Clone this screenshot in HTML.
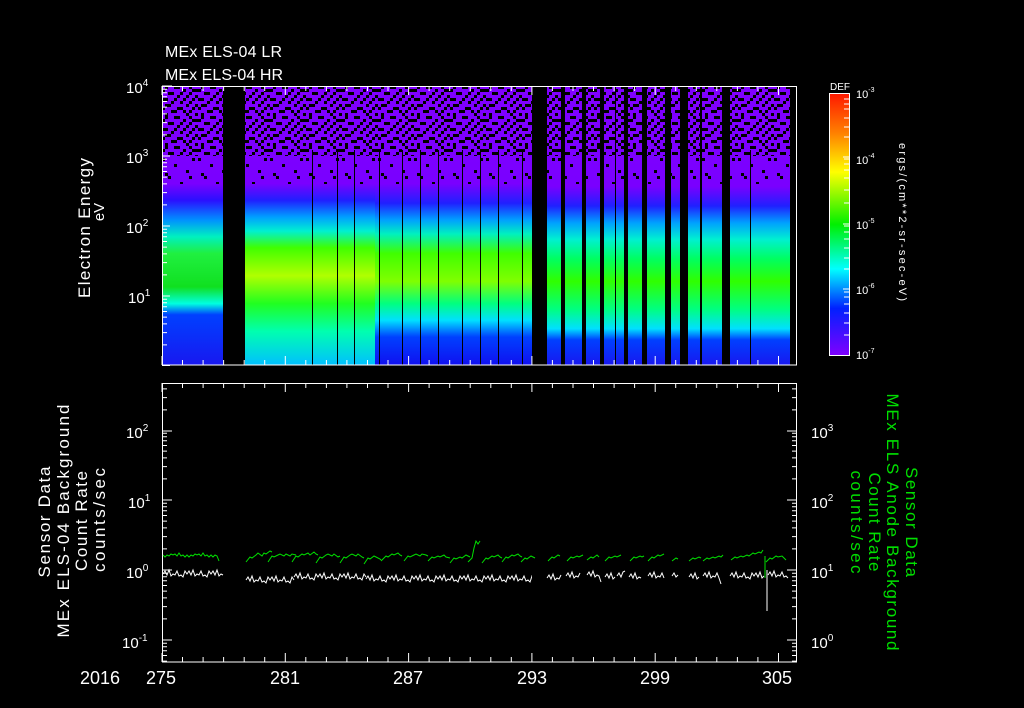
<!DOCTYPE html>
<html><head><meta charset="utf-8"><style>
html,body{margin:0;padding:0;background:#000;width:1024px;height:708px;overflow:hidden}
svg{display:block}
text{font-family:"Liberation Sans",sans-serif;fill:#fff}
</style></head><body>
<svg width="1024" height="708" viewBox="0 0 1024 708" xmlns="http://www.w3.org/2000/svg">
<defs>
<linearGradient id="gA" x1="0" y1="86" x2="0" y2="365" gradientUnits="userSpaceOnUse">
<stop offset="0" stop-color="#8000ff"/><stop offset=".35" stop-color="#7a00ff"/><stop offset=".41" stop-color="#2a10ff"/><stop offset=".48" stop-color="#0090ff"/><stop offset=".54" stop-color="#00f0c0"/><stop offset=".6" stop-color="#20f040"/><stop offset=".72" stop-color="#10e020"/><stop offset=".78" stop-color="#00ffe0"/><stop offset=".82" stop-color="#0040ff"/><stop offset="1" stop-color="#1818f0"/></linearGradient>
<linearGradient id="gB" x1="0" y1="86" x2="0" y2="365" gradientUnits="userSpaceOnUse">
<stop offset="0" stop-color="#8000ff"/><stop offset=".35" stop-color="#7a00ff"/><stop offset=".41" stop-color="#2020ff"/><stop offset=".47" stop-color="#00a0ff"/><stop offset=".52" stop-color="#00f0d0"/><stop offset=".58" stop-color="#40ff00"/><stop offset=".68" stop-color="#b0ff00"/><stop offset=".78" stop-color="#20ff20"/><stop offset=".88" stop-color="#00ffb0"/><stop offset="1" stop-color="#00c0ff"/></linearGradient>
<linearGradient id="gC" x1="0" y1="86" x2="0" y2="365" gradientUnits="userSpaceOnUse">
<stop offset="0" stop-color="#8000ff"/><stop offset=".35" stop-color="#7a00ff"/><stop offset=".42" stop-color="#2020ff"/><stop offset=".48" stop-color="#00a0ff"/><stop offset=".53" stop-color="#00f0c0"/><stop offset=".6" stop-color="#40ff00"/><stop offset=".7" stop-color="#80ff00"/><stop offset=".78" stop-color="#00ff80"/><stop offset=".84" stop-color="#00e0ff"/><stop offset=".9" stop-color="#0040ff"/><stop offset="1" stop-color="#1010f0"/></linearGradient>
<linearGradient id="gD" x1="0" y1="86" x2="0" y2="365" gradientUnits="userSpaceOnUse">
<stop offset="0" stop-color="#8000ff"/><stop offset=".36" stop-color="#7a00ff"/><stop offset=".43" stop-color="#2020ff"/><stop offset=".49" stop-color="#00a0ff"/><stop offset=".55" stop-color="#00f0d0"/><stop offset=".62" stop-color="#00ff60"/><stop offset=".7" stop-color="#30ff00"/><stop offset=".8" stop-color="#00ff80"/><stop offset=".87" stop-color="#00e0ff"/><stop offset=".91" stop-color="#0040ff"/><stop offset="1" stop-color="#1818f0"/></linearGradient>
<linearGradient id="cb" x1="0" y1="0" x2="0" y2="1">
<stop offset="0" stop-color="#ff1800"/><stop offset=".15" stop-color="#ff8000"/><stop offset=".3" stop-color="#ffff00"/><stop offset=".5" stop-color="#00f000"/><stop offset=".67" stop-color="#00ffff"/><stop offset=".82" stop-color="#0020ff"/><stop offset="1" stop-color="#8000ff"/></linearGradient>
<pattern id="nD" width="36" height="30" patternUnits="userSpaceOnUse" x="162" y="86">
<g fill="#000">
<rect x="3" y="0" width="3" height="3"/><rect x="12" y="0" width="6" height="3"/><rect x="27" y="0" width="3" height="3"/>
<rect x="0" y="3" width="3" height="3"/><rect x="21" y="3" width="3" height="3"/><rect x="30" y="3" width="6" height="3"/>
<rect x="6" y="6" width="6" height="3"/><rect x="18" y="6" width="3" height="3"/><rect x="27" y="6" width="3" height="3"/>
<rect x="15" y="9" width="3" height="3"/><rect x="24" y="9" width="3" height="3"/><rect x="33" y="9" width="3" height="3"/>
<rect x="0" y="12" width="6" height="3"/><rect x="12" y="12" width="3" height="3"/><rect x="21" y="12" width="3" height="3"/><rect x="30" y="12" width="3" height="3"/>
<rect x="9" y="15" width="3" height="3"/><rect x="18" y="15" width="3" height="3"/><rect x="27" y="15" width="3" height="3"/>
<rect x="3" y="18" width="6" height="3"/><rect x="24" y="18" width="3" height="3"/><rect x="33" y="18" width="3" height="3"/>
<rect x="0" y="21" width="3" height="3"/><rect x="15" y="21" width="6" height="3"/><rect x="30" y="21" width="3" height="3"/>
<rect x="9" y="24" width="6" height="3"/><rect x="21" y="24" width="3" height="3"/><rect x="27" y="24" width="3" height="3"/>
<rect x="3" y="27" width="3" height="3"/><rect x="24" y="27" width="3" height="3"/><rect x="33" y="27" width="3" height="3"/>
</g></pattern>
<pattern id="nS" width="36" height="30" patternUnits="userSpaceOnUse" x="162" y="86">
<g fill="#000"><rect x="6" y="0" width="3" height="3"/><rect x="27" y="0" width="3" height="3"/><rect x="18" y="6" width="3" height="3"/><rect x="0" y="12" width="3" height="3"/><rect x="30" y="12" width="3" height="3"/><rect x="12" y="18" width="3" height="3"/><rect x="24" y="24" width="3" height="3"/><rect x="3" y="27" width="3" height="3"/></g></pattern>
<g id="xt" stroke="#fff" stroke-width="1">
<path d="M162,0v9M182.5,0v5M203.1,0v5M223.6,0v5M244.2,0v5M264.7,0v5M285.3,0v9M305.8,0v5M326.4,0v5M346.9,0v5M367.5,0v5M388,0v5M408.6,0v9M429.1,0v5M449.7,0v5M470.2,0v5M490.8,0v5M511.3,0v5M531.9,0v9M552.4,0v5M573,0v5M593.5,0v5M614.1,0v5M634.6,0v5M655.2,0v9M675.7,0v5M696.3,0v5M716.8,0v5M737.4,0v5M757.9,0v5M778.5,0v9"/></g>
<g id="dec" stroke="#fff" stroke-width="1"><path d="M0,0h10M0,-21.1h5M0,-33.4h5M0,-42.1h5M0,-48.9h5M0,-54.5h5M0,-59.2h5M0,-63.2h5M0,-66.8h5"/></g>
<clipPath id="cT"><rect x="150" y="86" width="20" height="280"/></clipPath>
<clipPath id="cBt"><rect x="150" y="383" width="700" height="280"/></clipPath>
<clipPath id="cB2"><rect x="245" y="383" width="287" height="279"/></clipPath>
</defs>

<!-- spectrogram -->
<rect x="162" y="86" width="61" height="279" fill="url(#gA)"/>
<rect x="245" y="86" width="130" height="279" fill="url(#gB)"/>
<rect x="375" y="86" width="157" height="279" fill="url(#gC)"/>
<rect x="547" y="86" width="243" height="279" fill="url(#gD)"/>
<rect x="162" y="86" width="628" height="70" fill="url(#nD)"/>
<rect x="162" y="156" width="628" height="28" fill="url(#nS)"/>
<g fill="#000">
<rect x="223" y="86" width="22" height="279"/>
<rect x="532" y="86" width="15" height="279"/>
<rect x="561" y="86" width="4" height="279"/>
<rect x="582" y="86" width="4" height="279"/>
<rect x="600" y="86" width="4" height="279"/>
<rect x="615" y="86" width="1" height="279"/>
<rect x="624" y="86" width="4" height="279"/>
<rect x="642" y="86" width="5" height="279"/>
<rect x="665" y="86" width="6" height="279"/>
<rect x="680" y="86" width="8" height="279"/>
<rect x="700" y="86" width="2" height="279"/>
<rect x="722" y="86" width="8" height="279"/>
<rect x="790" y="86" width="7" height="279"/>
</g>
<g stroke="#000" stroke-width="1"><path d="M312.5,150V365M337.5,150V365M354.5,150V365M379.5,150V365M402.5,150V365M420.5,150V365M438.5,150V365M462.5,150V365M480.5,150V365M498.5,150V365M522.5,150V365M750.5,150V365"/></g>

<!-- top panel frame -->
<rect x="162.5" y="86.5" width="634" height="278.5" fill="none" stroke="#fff"/>
<use href="#xt" transform="translate(0,86)"/>
<use href="#xt" transform="translate(0,365) scale(1,-1)"/>
<g clip-path="url(#cT)">
<use href="#dec" transform="translate(162,366)"/>
<use href="#dec" transform="translate(162,296)"/>
<use href="#dec" transform="translate(162,226)"/>
<use href="#dec" transform="translate(162,156)"/>
</g>
<path d="M162,86h10" stroke="#fff"/>

<text x="165" y="57" font-size="16" textLength="117">MEx ELS-04 LR</text>
<text x="165" y="80" font-size="16" textLength="118">MEx ELS-04 HR</text>

<g font-size="15">
<text x="126" y="93">10<tspan font-size="10" dy="-7">4</tspan></text>
<text x="126" y="163">10<tspan font-size="10" dy="-7">3</tspan></text>
<text x="126" y="233">10<tspan font-size="10" dy="-7">2</tspan></text>
<text x="128" y="303">10<tspan font-size="10" dy="-7">1</tspan></text>
</g>
<text transform="translate(90,228) rotate(-90)" text-anchor="middle" font-size="17" textLength="140">Electron Energy</text>
<text transform="translate(104,212) rotate(-90)" text-anchor="middle" font-size="15">eV</text>

<!-- colorbar -->
<rect x="829.5" y="93.5" width="20" height="262" fill="url(#cb)" stroke="#fff"/>
<g stroke="#fff"><path d="M849,99h-5M849,104h-5M849,109h-5M849,118h-5M849,127h-5M849,137h-5M849,157h-6M849,159h-5M849,164h-5M849,170h-5M849,178h-5M849,190h-5M849,203h-5M849,224h-6M849,226h-5M849,232h-5M849,239h-5M849,248h-5M849,258h-5M849,269h-5M849,289h-6M849,292h-5M849,297h-5M849,304h-5M849,313h-5M849,323h-5M849,335h-5"/></g>
<text x="830" y="90" font-size="10">DEF</text>
<g font-size="11">
<text x="856" y="98">10<tspan font-size="7" dy="-6">-3</tspan></text>
<text x="856" y="164">10<tspan font-size="7" dy="-6">-4</tspan></text>
<text x="856" y="229">10<tspan font-size="7" dy="-6">-5</tspan></text>
<text x="856" y="294">10<tspan font-size="7" dy="-6">-6</tspan></text>
<text x="856" y="359">10<tspan font-size="7" dy="-6">-7</tspan></text>
</g>
<text transform="translate(899,222) rotate(90)" text-anchor="middle" font-size="11" textLength="158">ergs/(cm**2-sr-sec-eV)</text>

<!-- bottom panel -->
<rect x="162.5" y="383.5" width="634" height="278.5" fill="none" stroke="#fff"/>
<use href="#xt" transform="translate(0,383)"/>
<use href="#xt" transform="translate(0,662) scale(1,-1)"/>
<g clip-path="url(#cBt)">
<use href="#dec" transform="translate(162,710)"/>
<use href="#dec" transform="translate(162,640)"/>
<use href="#dec" transform="translate(162,570)"/>
<use href="#dec" transform="translate(162,500)"/>
<use href="#dec" transform="translate(162,431)"/>
<use href="#dec" transform="translate(797,710) scale(-1,1)"/>
<use href="#dec" transform="translate(797,640) scale(-1,1)"/>
<use href="#dec" transform="translate(797,570) scale(-1,1)"/>
<use href="#dec" transform="translate(797,500) scale(-1,1)"/>
<use href="#dec" transform="translate(797,431) scale(-1,1)"/>
</g>
<g font-size="15">
<text x="126" y="438">10<tspan font-size="10" dy="-7">2</tspan></text>
<text x="128" y="508">10<tspan font-size="10" dy="-7">1</tspan></text>
<text x="126" y="578">10<tspan font-size="10" dy="-7">0</tspan></text>
<text x="122" y="648">10<tspan font-size="10" dy="-7">-1</tspan></text>
<text x="811" y="438">10<tspan font-size="10" dy="-7">3</tspan></text>
<text x="811" y="508">10<tspan font-size="10" dy="-7">2</tspan></text>
<text x="811" y="578">10<tspan font-size="10" dy="-7">1</tspan></text>
<text x="811" y="648">10<tspan font-size="10" dy="-7">0</tspan></text>
</g>

<!-- data lines -->
<g fill="none" stroke-width="1">
<g stroke="#fff">
<path d="M163,574 l2,-3 l2,4 l2,-5 l2,6 l2,-2 l2,1 l2,-4 l2,5 l2,-1 l2,2 l2,-6 l2,3 l2,-3 l2,4 l2,-5 l2,6 l2,-2 l2,1 l2,-4 l2,5 l2,-1 l2,2 l2,-6 l2,3 l2,-3 l2,4 l2,-5 l2,6 l2,-2 l2,1"/>
<g clip-path="url(#cB2)">
<path d="M246,580 l2,-3 l2,4 l2,-5 l2,6 l2,-2 l2,1 l2,-4 l2,5 l2,-1 l2,2 l2,-6 l2,3 l2,-3 l2,4 l2,-5 l2,6 l2,-2 l2,1 l2,-4 l2,5 l2,-1 l2,2 l2,-6 l2,3 m0,-3 l2,-3 l2,4 l2,-5 l2,6 l2,-2 l2,1 l2,-4 l2,5 l2,-1 l2,2 l2,-6 l2,3 l2,-3 l2,4 l2,-5 l2,6 l2,-2 l2,1 l2,-4 l2,5 l2,-1 l2,2 l2,-6 l2,3 l2,-3 l2,4 l2,-5 l2,6 l2,-2 l2,1 l2,-4 l2,5 l2,-1 l2,2 l2,-6 l2,3 m0,2 l2,-3 l2,4 l2,-5 l2,6 l2,-2 l2,1 l2,-4 l2,5 l2,-1 l2,2 l2,-6 l2,3 l2,-3 l2,4 l2,-5 l2,6 l2,-2 l2,1 l2,-4 l2,5 l2,-1 l2,2 l2,-6 l2,3 l2,-3 l2,4 l2,-5 l2,6 l2,-2 l2,1 l2,-4 l2,5 l2,-1 l2,2 l2,-6 l2,3 l2,-3 l2,4 l2,-5 l2,6 l2,-2 l2,1 l2,-4 l2,5 l2,-1 l2,2 l2,-6 l2,3 l2,-3 l2,4 l2,-5 l2,6 l2,-2 l2,1 l2,-4 l2,5 l2,-1 l2,2 l2,-6 l2,3 l2,-3 l2,4 l2,-5 l2,6 l2,-2 l2,1 l2,-4 l2,5 l2,-1 l2,2 l2,-6 l2,3 l2,-3 l2,4 l2,-5 l2,6 l2,-2 l2,1 l2,-4 l2,5 l2,-1 l2,2 l2,-6 l2,3 l2,-3 l2,4 l2,-5 l2,6 l2,-2 l2,1 l2,-4 l2,5 l2,-1 l2,2 l2,-6 l2,3 l2,-3 l2,4 l2,-5 l2,6 l2,-2 l2,1 l2,-4 l2,5 l2,-1 l2,2 l2,-6 l2,3"/>
</g>
<path d="M547,578 l2,-3 l2,4 l2,-5 l2,6 l2,-2 l2,1 l2,-4 M566,576 l2,-3 l2,4 l2,-5 l2,6 l2,-2 l2,1 l2,-4 M587,575 l2,-3 l2,4 l2,-5 l2,6 l2,-2 l2,1 l2,6 M605,577 l2,-3 l2,4 l2,-5 l2,6 l2,-2 M617,576 l2,-3 l2,4 l2,-5 l2,-1 M629,577 l2,-3 l2,4 l2,-5 l2,6 l2,-2 l2,1 M648,576 l2,-3 l2,4 l2,-5 l2,6 l2,-2 l2,1 l2,-4 l2,5 M672,576 l2,-3 l2,4 l2,-2 M689,577 l2,-3 l2,4 l2,-5 l2,6 l2,-2 M703,576 l2,-3 l2,4 l2,-5 l2,6 l2,-2 l2,1 l2,-4 l2,5 l2,6"/>
<path d="M730,576 l2,-3 l2,4 l2,-5 l2,6 l2,-2 l2,1 l2,-4 l2,5 l2,-1 l2,2 l2,-6 l2,3 l2,-3 l2,4 l2,-5 l2,6 l2,-2 M767,570 V611 M768,575 l2,-3 l2,4 l2,-5 l2,6 l2,-2 l2,1 l2,-4 l2,5 l2,-1 l2,2"/>
</g>
<g stroke="#00e000">
<path d="M163,555 l2,2 l2,-2 l2,1 l2,-2 l2,1 l2,-1 l2,2 l2,-3 l2,3 l2,-1 l2,2 l2,-2 l2,2 l2,-2 l2,1 l2,-2 l2,1 l2,-1 l2,2 l2,-3 l2,3 l2,-1 l2,2 l2,-2 l2,2 l2,-2 l2,1 l2,5"/>
<path d="M246,562 l4,-5 l2,1 l4,-3 l2,-2 l4,3 l2,-3 l2,1 l4,-3 l2,1 M268,562 l4,-6 l2,1 l4,-2 l2,-1 l4,2 l2,-2 l4,2 l2,-2 l4,1 M292,562 l4,-6 l2,1 l4,-3 l2,1 l4,-2 l2,2 l4,-3 l2,2 l2,1 M316,563 l4,-6 l2,1 l4,-3 l2,-1 l4,2 l2,-2 l4,3 l2,-1 M340,563 l4,-6 l2,1 l4,-3 l2,-1 l4,2 l2,-2 l4,3 l2,1 M364,564 l4,-6 l2,1 l4,-3 l2,1 l4,2 l2,2 M382,560 l4,-4 l2,1 l4,-3 l2,1 l4,-2 l2,2 l2,1 M404,561 l4,-5 l2,1 l4,-2 l2,-1 l4,2 l2,-2 l4,1 l2,1 M428,561 l4,-4 l2,1 l4,-2 l2,1 l4,-2 l2,2 l4,1 M450,563 l4,-5 l2,1 l4,-2 l2,1 l4,-3 l2,1 l2,1 M468,562 l4,-4 l2,-10 l2,-7 l2,3 l2,-3"/>
<path d="M482,563 l4,-5 l2,1 l4,-3 l2,1 l4,-2 l2,2 l2,1 M502,562 l4,-5 l2,1 l4,-3 l2,1 l4,-2 l2,2 l2,1 M521,562 l4,-4 l2,1 l4,-3 l2,1 l2,1"/>
<path d="M548,561 l4,-4 l2,1 l4,-3 l2,1 M567,561 l4,-4 l2,1 l4,-2 l2,1 l4,-2 M587,560 l4,-3 l2,1 l4,-3 l2,2 M605,561 l4,-4 l2,1 l4,-2 l2,1 l4,-2 M630,561 l4,-4 l2,1 l4,-2 l2,1 l2,-1 M648,561 l4,-4 l2,1 l4,-3 l2,1 l4,-2 M672,561 l4,-3 l2,1 M689,561 l4,-3 l2,1 l4,-2 l2,1 M703,561 l4,-3 l2,1 l4,-2 l2,1 l4,-2 l2,1 l2,-2 M731,560 l4,-3 l2,1 l4,-2 l2,1 l4,-2 l2,1 l4,-3 l2,1 l4,-2 l2,1 l2,-3 M765,556 l0,22 M766,562 l4,-4 l2,1 l4,-3 l2,1 l4,-1 l2,2 l2,2"/>
</g>
</g>

<!-- bottom labels -->
<g font-size="17">
<text transform="translate(50,522) rotate(-90)" text-anchor="middle" textLength="111">Sensor Data</text>
<text transform="translate(69,521) rotate(-90)" text-anchor="middle" textLength="233">MEx ELS-04 Background</text>
<text transform="translate(87,521) rotate(-90)" text-anchor="middle" textLength="100">Count Rate</text>
<text transform="translate(105,520) rotate(-90)" text-anchor="middle" textLength="104">counts/sec</text>
</g>
<g font-size="17">
<text transform="translate(906,522) rotate(90)" text-anchor="middle" textLength="110" style="fill:#00e000">Sensor Data</text>
<text transform="translate(887,522) rotate(90)" text-anchor="middle" textLength="257" style="fill:#00e000">MEx ELS Anode Background</text>
<text transform="translate(869,522) rotate(90)" text-anchor="middle" textLength="99" style="fill:#00e000">Count Rate</text>
<text transform="translate(851,522) rotate(90)" text-anchor="middle" textLength="103" style="fill:#00e000">counts/sec</text>
</g>
<g font-size="18" text-anchor="middle">
<text x="100" y="684">2016</text>
<text x="161" y="684">275</text>
<text x="285" y="684">281</text>
<text x="408" y="684">287</text>
<text x="532" y="684">293</text>
<text x="655" y="684">299</text>
<text x="777" y="684">305</text>
</g>
</svg>
</body></html>
